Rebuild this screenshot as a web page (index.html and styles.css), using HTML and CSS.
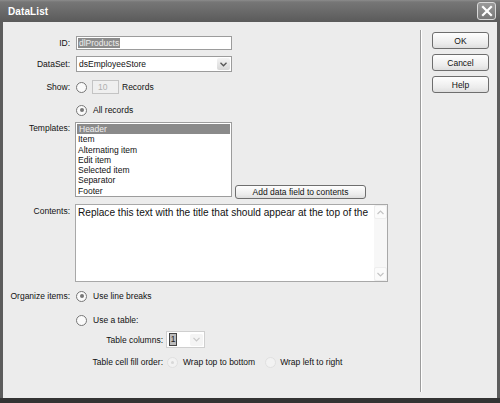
FILE: index.html
```html
<!DOCTYPE html>
<html lang="en">
<head>
    <meta charset="UTF-8">
    <title>DataList</title>
    <link rel="stylesheet" href="styles.css">
</head>
<body>

    <div class="window">
        <!-- Title bar -->
        <div class="titlebar">
            <span class="title">DataList</span>
            <div class="close-btn">
                <svg width="12" height="12" viewBox="0 0 12 12">
                    <path d="M2 2 L10 10 M10 2 L2 10" stroke="#fff" stroke-width="2.2" stroke-linecap="square"/>
                </svg>
            </div>
        </div>

        <div class="client">
            <!-- Form -->
            <div class="form">
                <div class="row row-id">
                    <label>ID:</label>
                    <div class="textbox"><span class="selected-text">dlProducts</span></div>
                </div>

                <div class="row row-dataset">
                    <label>DataSet:</label>
                    <div class="select">
                        <span class="select-value">dsEmployeeStore</span>
                        <span class="select-arrow">
                            <svg width="7" height="5" viewBox="0 0 7 5"><path d="M0.5 0.8 L3.5 3.8 L6.5 0.8" fill="none" stroke="#555" stroke-width="1.3"/></svg>
                        </span>
                    </div>
                </div>

                <div class="row row-show">
                    <label>Show:</label>
                    <div class="inline">
                        <span class="radio"></span>
                        <div class="textbox small disabled">10</div>
                        <span class="text">Records</span>
                    </div>
                </div>

                <div class="row row-all">
                    <label></label>
                    <div class="inline">
                        <span class="radio checked"></span>
                        <span class="text">All records</span>
                    </div>
                </div>

                <div class="row row-templates">
                    <label>Templates:</label>
                    <div class="inline bottom">
                        <ul class="listbox">
                            <li class="active">Header</li>
                            <li>Item</li>
                            <li>Alternating item</li>
                            <li>Edit item</li>
                            <li>Selected item</li>
                            <li>Separator</li>
                            <li>Footer</li>
                        </ul>
                        <button class="btn wide">Add data field to contents</button>
                    </div>
                </div>

                <div class="row row-contents">
                    <label>Contents:</label>
                    <div class="textarea">
                        <div class="textarea-text">Replace this text with the title that should appear at the top of the</div>
                        <div class="scrollbar">
                            <span class="scroll-btn">
                                <svg width="7" height="5" viewBox="0 0 7 5"><path d="M0.5 4 L3.5 1 L6.5 4" fill="none" stroke="#c4c4c4" stroke-width="1.2"/></svg>
                            </span>
                            <span class="scroll-btn">
                                <svg width="7" height="5" viewBox="0 0 7 5"><path d="M0.5 1 L3.5 4 L6.5 1" fill="none" stroke="#c4c4c4" stroke-width="1.2"/></svg>
                            </span>
                        </div>
                    </div>
                </div>

                <div class="row row-organize">
                    <label>Organize items:</label>
                    <div class="inline">
                        <span class="radio checked"></span>
                        <span class="text">Use line breaks</span>
                    </div>
                </div>

                <div class="row row-table">
                    <label></label>
                    <div class="inline">
                        <span class="radio"></span>
                        <span class="text">Use a table:</span>
                    </div>
                </div>

                <div class="row row-columns">
                    <label></label>
                    <div class="subrow">
                        <span class="sublabel">Table columns:</span>
                        <div class="select mini">
                            <span class="select-value"><span class="focus-val">1</span></span>
                            <span class="select-arrow light">
                                <svg width="7" height="5" viewBox="0 0 7 5"><path d="M0.5 0.8 L3.5 3.8 L6.5 0.8" fill="none" stroke="#c8c8c8" stroke-width="1.2"/></svg>
                            </span>
                        </div>
                    </div>
                </div>

                <div class="row row-fill">
                    <label></label>
                    <div class="subrow">
                        <span class="sublabel">Table cell fill order:</span>
                        <div class="inline">
                            <span class="radio faint checked-faint"></span>
                            <span class="text">Wrap top to bottom</span>
                            <span class="radio faint second"></span>
                            <span class="text">Wrap left to right</span>
                        </div>
                    </div>
                </div>
            </div>

            <div class="divider"></div>

            <!-- Buttons -->
            <div class="actions">
                <button class="btn">OK</button>
                <button class="btn">Cancel</button>
                <button class="btn">Help</button>
            </div>
        </div>
    </div>

</body>
</html>
```

FILE: styles.css
```css
body {
    margin: 0;
    width: 500px;
    height: 403px;
    overflow: hidden;
    font-family: "Liberation Sans", Arial, sans-serif;
    font-size: 8.5px;
    color: #111;
    background-color: #4a4a4a;
}
.window {
    width: 500px;
    height: 403px;
    display: flex;
    flex-direction: column;
    background-color: #5c5c5c;
    box-sizing: border-box;
    border-bottom: 5px solid #333;
}
.titlebar {
    height: 22px;
    flex-shrink: 0;
    display: flex;
    align-items: center;
    justify-content: space-between;
    padding: 0 4px 0 8px;
    background: linear-gradient(#8c8c8c 0, #767676 2px, #6a6a6a 50%, #5a5a5a 100%);
}
.title {
    color: #fff;
    font-weight: bold;
    font-size: 10px;
    letter-spacing: 0.1px;
}
.close-btn {
    width: 17px;
    height: 16px;
    border: 1px solid #d8d8d8;
    border-radius: 3px;
    background: linear-gradient(#9a9a9a, #787878);
    display: flex;
    align-items: center;
    justify-content: center;
}
.client {
    flex-grow: 1;
    display: flex;
    margin: 0 3px;
    background-color: #ececec;
}
.form {
    width: 414px;
    padding-top: 14px;
}
.row {
    display: grid;
    grid-template-columns: 67px 1fr;
    column-gap: 5px;
    align-items: center;
}
.row label {
    text-align: right;
}
.row-id { height: 14px; }
.row-dataset { height: 16px; margin-top: 6px; }
.row-show { height: 14px; margin-top: 8px; }
.row-all { height: 12px; margin-top: 10px; }
.row-templates { margin-top: 6px; align-items: start; }
.row-templates label { padding-top: 1px; }
.row-contents { margin-top: 7px; align-items: start; }
.row-contents label { padding-top: 2px; }
.row-organize { height: 12px; margin-top: 8px; }
.row-table { height: 12px; margin-top: 12px; }
.row-columns { height: 17px; margin-top: 5px; }
.row-fill { height: 12px; margin-top: 8px; }

.inline {
    display: flex;
    align-items: center;
}
.inline.bottom {
    align-items: flex-end;
}
.text {
    margin-left: 6px;
}

.textbox {
    width: 156px;
    height: 14px;
    box-sizing: border-box;
    border: 1px solid #9c9c9c;
    background-color: #fff;
    margin-left: 1px;
    display: flex;
    align-items: center;
    padding-left: 1px;
}
.selected-text {
    background-color: #8c8c8c;
    color: #eee;
    padding: 0 1px;
    line-height: 10px;
}
.textbox.small {
    width: 27px;
    margin-left: 5px;
    padding-left: 5px;
}
.textbox.disabled {
    background-color: #efefef;
    border-color: #c4c4c4;
    color: #b0b0b0;
}
.textbox.small + .text {
    margin-left: 3px;
}

.select {
    width: 156px;
    height: 16px;
    box-sizing: border-box;
    border: 1px solid #9c9c9c;
    background-color: #fff;
    margin-left: 1px;
    display: flex;
    align-items: center;
    justify-content: space-between;
    padding-left: 2px;
}
.select-arrow {
    width: 13px;
    height: 12px;
    margin-right: 1px;
    background: linear-gradient(#f4f4f4, #d8d8d8);
    border-radius: 2px;
    display: flex;
    align-items: center;
    justify-content: center;
}
.select-arrow.light {
    background: #f4f4f4;
}
.select.mini {
    width: 39px;
    height: 17px;
    margin-left: 0;
    border-color: #cfcfcf;
}
.focus-val {
    display: inline-block;
    width: 6px;
    height: 11px;
    line-height: 11px;
    text-align: center;
    border: 1px solid #444;
    background-color: #bbb;
    color: #222;
}

.radio {
    width: 9px;
    height: 9px;
    border: 1px solid #777;
    border-radius: 50%;
    background-color: #fafafa;
    flex-shrink: 0;
    position: relative;
}
.radio.checked::after {
    content: '';
    position: absolute;
    top: 2.5px;
    left: 2.5px;
    width: 4px;
    height: 4px;
    border-radius: 50%;
    background-color: #777;
}
.radio.faint {
    border-color: #e0e0e0;
    background-color: #f2f2f2;
}
.radio.checked-faint::after {
    content: '';
    position: absolute;
    top: 3px;
    left: 3px;
    width: 3px;
    height: 3px;
    border-radius: 50%;
    background-color: #d8d8d8;
}
.radio.second {
    margin-left: 10px;
}
.inline .radio:first-child {
    margin-left: 1px;
}

.listbox {
    list-style: none;
    margin: 0;
    padding: 1px 0 2px;
    width: 157px;
    height: 75px;
    box-sizing: border-box;
    border: 1px solid #9c9c9c;
    background-color: #fff;
    line-height: 10.3px;
}
.listbox li {
    padding-left: 2px;
}
.listbox li.active {
    background-color: #8a8a8a;
    color: #f0f0f0;
    margin: 0 1px;
}

.btn {
    font-family: "Liberation Sans", Arial, sans-serif;
    font-size: 8.5px;
    color: #111;
    width: 57px;
    height: 17px;
    padding: 0;
    border: 1px solid #6e6e6e;
    border-radius: 3px;
    background: linear-gradient(#fefefe, #ececec 70%, #dedede);
}
.btn.wide {
    width: 131px;
    height: 14px;
    margin-left: 3px;
    margin-bottom: -2px;
}

.textarea {
    width: 313px;
    height: 78px;
    box-sizing: border-box;
    border: 1px solid #a8a8a8;
    background-color: #fff;
    display: flex;
}
.textarea-text {
    flex-grow: 1;
    white-space: nowrap;
    font-size: 10.1px;
    padding: 2px 0 0 2px;
    color: #111;
}
.scrollbar {
    width: 13px;
    flex-shrink: 0;
    background-color: #f7f7f7;
    display: flex;
    flex-direction: column;
    justify-content: space-between;
}
.scroll-btn {
    height: 12px;
    display: flex;
    align-items: center;
    justify-content: center;
    border: 1px solid #eee;
    border-radius: 2px;
    background-color: #fbfbfb;
}

.subrow {
    display: grid;
    grid-template-columns: 88px auto;
    column-gap: 3px;
    align-items: center;
}
.sublabel {
    text-align: right;
    white-space: nowrap;
}
.row-fill .text {
    margin-left: 5px;
}
.row-fill .text:last-child {
    margin-left: 4px;
}

.divider {
    width: 1px;
    margin: 8px 0 6px 3px;
    background-color: #9c9c9c;
    border-right: 1px solid #fff;
}
.actions {
    display: flex;
    flex-direction: column;
    gap: 5px;
    padding: 10px 0 0 10px;
}
```
